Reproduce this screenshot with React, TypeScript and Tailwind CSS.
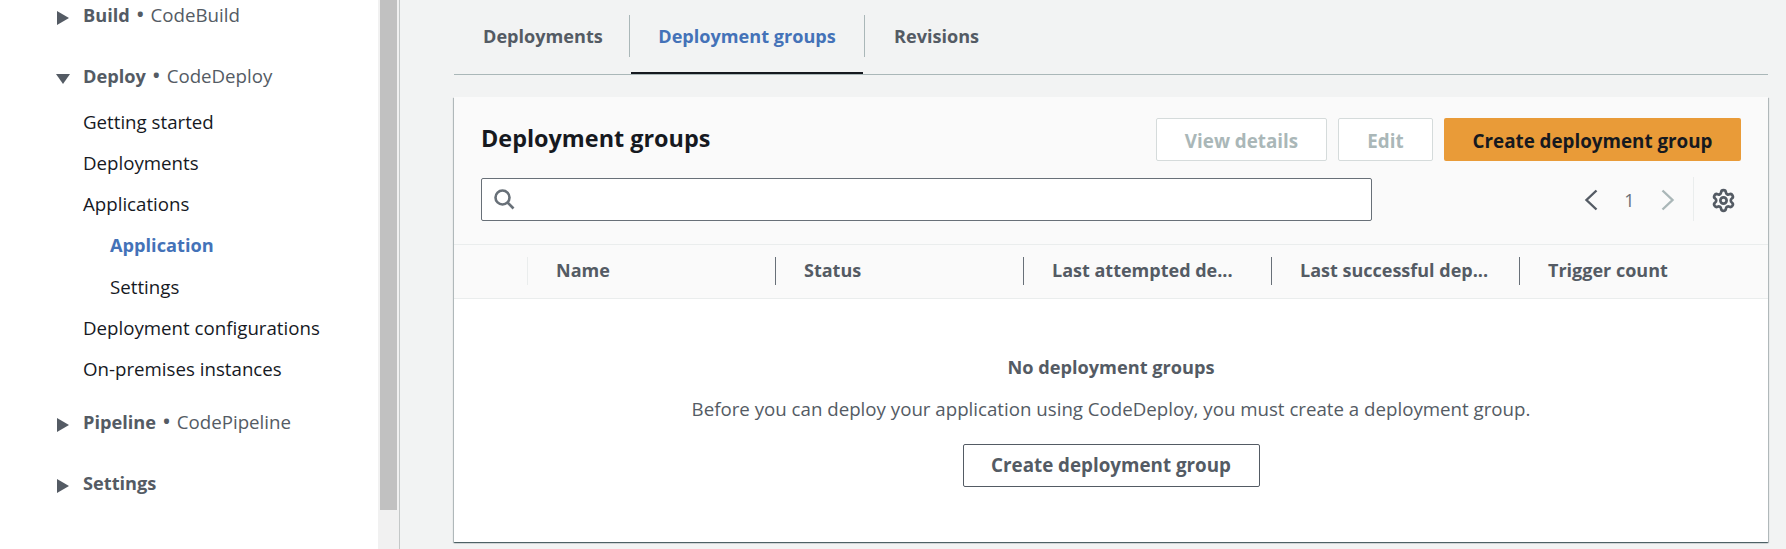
import { Settings } from "lucide-react";

const columns = ["Name", "Status", "Last attempted de...", "Last successful dep...", "Trigger count"];

function Caret({ open }: { open?: boolean }) {
  return (
    <svg width="14" height="16" viewBox="0 0 14 16" className="mt-[5px] shrink-0 fill-[#545b64]">
      {open ? <path d="M0 3h14L7 13z" /> : <path d="M1 1l12 7-12 7z" />}
    </svg>
  );
}

function Chevron({ left, className }: { left?: boolean; className: string }) {
  return (
    <svg width="14" height="22" viewBox="0 0 14 22" fill="none" stroke="currentColor" strokeWidth="2.4" className={className}>
      <path d={left ? "M12.5 1.5L2.5 11l10 9.5" : "M1.5 1.5l10 9.5-10 9.5"} />
    </svg>
  );
}

function NavHeader({ title, service, open, className }: { title: string; service?: string; open?: boolean; className: string }) {
  return (
    <div className={`flex h-[30px] items-center pl-[56px] ${className}`}>
      <Caret open={open} />
      <span className="ml-[13px] text-[#545b64]">
        <span className="text-[18.2px] font-bold">{title}</span>
        {service && (
          <span>
            {" "}
            <span className="mx-[1px] align-[-1px] text-[24px] leading-[20px]">•</span> {service}
          </span>
        )}
      </span>
    </div>
  );
}

function NavLink({ children, sub, active }: { children: string; sub?: boolean; active?: boolean }) {
  return (
    <div
      className={`flex items-center pt-[2px] ${sub ? "pl-[110px]" : "pl-[83px]"} ${
        active ? "h-[42px] text-[18.2px] font-bold text-[#4472b8]" : "h-[41px] text-[#16191f]"
      }`}
    >
      {children}
    </div>
  );
}

function Sidebar() {
  return (
    <aside className="w-[378px] shrink-0 bg-white">
      <NavHeader title="Build" service="CodeBuild" className="" />
      <NavHeader title="Deploy" service="CodeDeploy" open className="mt-[31px]" />
      <div className="mt-[10px]">
        <NavLink>Getting started</NavLink>
        <NavLink>Deployments</NavLink>
        <NavLink>Applications</NavLink>
        <NavLink sub active>Application</NavLink>
        <NavLink sub>Settings</NavLink>
        <NavLink>Deployment configurations</NavLink>
        <NavLink>On-premises instances</NavLink>
      </div>
      <NavHeader title="Pipeline" service="CodePipeline" className="mt-[18px]" />
      <NavHeader title="Settings" className="mt-[31px]" />
    </aside>
  );
}

function Tabs() {
  return (
    <div className="flex h-[75px] items-start border-b border-[#aab7b8] text-[18.1px] font-bold text-[#545b64]">
      <div className="mt-[15px] flex h-[42px] w-[176px] items-center border-r border-[#aab7b8] pl-[29px] pt-[2px]">Deployments</div>
      <div className="relative mt-[15px] flex h-[42px] w-[235px] items-center justify-center border-r border-[#aab7b8] pt-[2px] text-[#4472b8]">
        Deployment groups
        <span className="absolute bottom-[-17px] left-[1px] right-[1px] h-[2px] bg-[#16191f]" />
      </div>
      <div className="mt-[15px] flex h-[42px] items-center pl-[29px] pt-[2px]">Revisions</div>
    </div>
  );
}

function Toolbar() {
  return (
    <div className="h-[148px] border-b border-[#eaeded] bg-[#fafafa] px-[27px] text-[18.8px]">
      <div className="flex h-[80px] items-start">
        <h2 className="mt-[27px] text-[23.4px] font-bold leading-[28px] text-[#16191f]">Deployment groups</h2>
        <div className="ml-auto mt-[21px] flex gap-[11px] font-bold">
          <button className="h-[43px] w-[171px] rounded-[2px] border border-[#d5dbdb] bg-white pt-[3px] text-[#aab7b8]">View details</button>
          <button className="h-[43px] w-[95px] rounded-[2px] border border-[#d5dbdb] bg-white pt-[3px] text-[#aab7b8]">Edit</button>
          <button className="h-[43px] w-[297px] rounded-[2px] bg-[#e99b38] pt-[3px] text-[#16191f]">Create deployment group</button>
        </div>
      </div>
      <div className="flex h-[44px] items-center">
        <div className="flex h-[43px] w-[891px] items-center rounded-[2px] border border-[#687078] bg-white pl-[11px]">
          <svg width="22" height="22" viewBox="0 0 22 22" fill="none" stroke="#687078" strokeWidth="2.6">
            <circle cx="9.5" cy="9.5" r="7" />
            <path d="M14.5 14.5l6 6" />
          </svg>
        </div>
        <div className="ml-auto flex h-full items-center">
          <Chevron left className="mt-[2px] text-[#545b64]" />
          <span className="mt-[2px] w-[63px] text-center text-[18px] text-[#687078]">1</span>
          <Chevron className="mt-[2px] text-[#aab7b8]" />
          <div className="ml-[18px] h-full w-px bg-[#eaeded]" />
          <Settings size={25} strokeWidth={2.6} className="ml-[17px] mr-[5px] mt-[2px] text-[#545b64]" />
        </div>
      </div>
    </div>
  );
}

function Table() {
  return (
    <div className="flex h-[54px] items-center border-b border-[#eaeded] bg-[#fafafa] pb-[2px] text-[18px] font-bold text-[#545b64]">
      <div className="w-[73px]" />
      {columns.map((col, i) => (
        <div
          key={col}
          className={`flex h-[28px] w-[248px] items-center border-l pl-[28px] ${i === 0 ? "border-[#eaeded]" : "border-[#687078]"}`}
        >
          {col}
        </div>
      ))}
    </div>
  );
}

function EmptyState() {
  return (
    <div className="flex h-[243px] flex-col items-center bg-white text-[#545b64]">
      <p className="mt-[56px] h-[24px] text-[18.2px] font-bold leading-[24px]">No deployment groups</p>
      <p className="mt-[18px] h-[24px] leading-[24px]">Before you can deploy your application using CodeDeploy, you must create a deployment group.</p>
      <button className="mt-[23px] h-[43px] w-[297px] rounded-[2px] border border-[#545b64] bg-white text-[18.8px] font-bold">Create deployment group</button>
    </div>
  );
}

export default function App() {
  return (
    <div className="flex h-[549px] w-[1786px] overflow-hidden bg-[#f2f3f3] font-['Open_Sans',sans-serif] text-[18.7px]">
      <Sidebar />
      {/* scrollbar */}
      <div className="w-[22px] shrink-0 border-r border-[#c4c8c8] bg-[#f1f1f1] pl-[2px]">
        <div className="h-[510px] w-[17px] bg-[#c1c1c1]" />
      </div>
      <main className="flex-1 pl-[54px] pr-[18px]">
        <Tabs />
        <section className="mt-[22px] shadow-[0_1px_1px_0_rgba(0,28,36,0.5),1px_1px_1px_0_rgba(0,28,36,0.2),-1px_1px_1px_0_rgba(0,28,36,0.2)]">
          <Toolbar />
          <Table />
          <EmptyState />
        </section>
      </main>
    </div>
  );
}
